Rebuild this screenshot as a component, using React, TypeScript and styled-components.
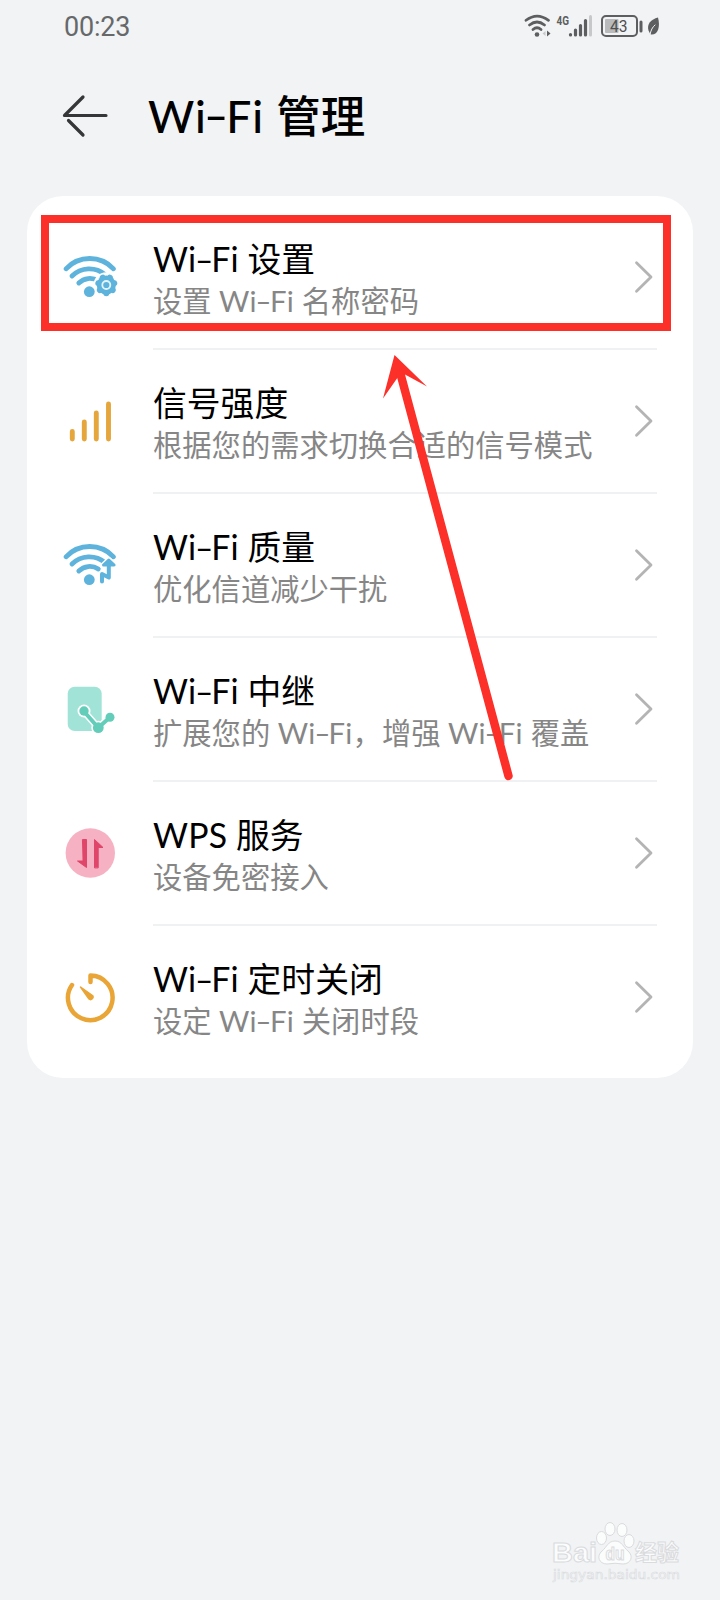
import React from "react";
import styled, { createGlobalStyle } from "styled-components";

const Global = createGlobalStyle`
  * { box-sizing: border-box; }
  body { margin: 0; background: #f1f3f5; font-family: "Lato", "Noto Sans CJK SC", sans-serif; }
`;

const Screen = styled.div`
  position: relative;
  width: 720px;
  height: 1600px;
  overflow: hidden;
  background: #f1f3f5;
`;

const StatusBar = styled.header`
  display: flex;
  justify-content: space-between;
  align-items: center;
  height: 54px;
  padding: 0 58px 0 64px;
`;

const Clock = styled.time`
  font-family: "Roboto", sans-serif;
  font-size: 27px;
  line-height: 54px;
  letter-spacing: -0.2px;
  color: #66686a;
`;

const TitleBar = styled.div`
  display: flex;
  align-items: center;
  gap: 37px;
  height: 142px;
  padding: 0 0 19px 61px;
`;

const Heading = styled.h1`
  margin: 0;
  padding-top: 1px;
  font-size: 44.5px;
  line-height: 60px;
  font-weight: 500;
  color: #000;
  white-space: pre;
`;

const Card = styled.main`
  width: 666px;
  margin-left: 27px;
  padding: 10px 36px 8px 33px;
  border-radius: 36px;
  background: #fff;
`;

const Row = styled.section`
  display: flex;
  height: 144px;
`;

const IconSlot = styled.div`
  display: flex;
  align-items: center;
  width: 93px;
  padding-bottom: 2px;
`;

const RowBody = styled.div<{ $last: boolean }>`
  flex: 1;
  display: flex;
  align-items: center;
  justify-content: space-between;
  padding-right: 3px;
  border-bottom: 2px solid ${(p) => (p.$last ? "transparent" : "#f0f1f2")};
`;

const Texts = styled.div`
  display: flex;
  flex-direction: column;
  padding-top: 6px;
`;

const Title = styled.div`
  font-size: 33.8px;
  line-height: 42px;
  color: #000;
  white-space: pre;
`;

const Subtitle = styled.div`
  font-size: 29.3px;
  line-height: 42px;
  color: #868686;
  white-space: pre;
`;

const Latin = styled.span<{ $space: number }>`
  letter-spacing: ${(p) => p.$space}em;
`;

const Dash = styled.span`
  display: inline-block;
  margin: 0 0.035em;
  transform: scale(1.5, 0.9);
`;

const Highlight = styled.div`
  position: absolute;
  left: 41px;
  top: 215px;
  width: 630px;
  height: 116px;
  border: 8px solid #fc3029;
`;

const Overlay = styled.svg`
  position: absolute;
  left: 0;
  top: 0;
  pointer-events: none;
`;

const Watermark = styled.svg`
  position: absolute;
  left: 545px;
  top: 1515px;
`;

const Mixed = ({ text, space = 0.005 }: { text: string; space?: number }) => (
  <>
    {text.split(/([A-Za-z]+ ?|-)/).map((part, i) => {
      if (part === "-") return <Dash key={i}>-</Dash>;
      return i % 2 ? <Latin key={i} $space={space}>{part}</Latin> : part;
    })}
  </>
);

const Glyph = ({ children }: { children: React.ReactNode }) => (
  <svg width="60" height="60" viewBox="0 0 60 60" fill="none" strokeLinecap="round" strokeLinejoin="round">
    {children}
  </svg>
);

const WifiArcs = () => (
  <g stroke="#5db3dc" strokeWidth="4.8">
    <path d="M6 21.800a32.500 32.500 0 0 1 47.500 0" />
    <path d="M12 29a24.500 24.500 0 0 1 33 -1.500" />
    <path d="M18.800 36a15.500 15.500 0 0 1 19.500 -2" />
  </g>
);

const WifiDot = () => <circle cx="29.300" cy="44.700" r="5.400" fill="#5db3dc" />;

const lobes = Array.from({ length: 7 }, (_, i) => 180 + (i * 360) / 7);

const SettingsIcon = () => (
  <Glyph>
    <WifiArcs />
    <circle cx="46.300" cy="38" r="12.800" fill="#fff" />
    <WifiDot />
    <g fill="#5db3dc">
      <circle cx="46.300" cy="38" r="9.600" />
      {lobes.map((a) => (
        <circle key={a} cx="46.300" cy="29.800" r="3" transform={`rotate(${a} 46.300 38)`} />
      ))}
    </g>
    <circle cx="46.300" cy="38" r="4" stroke="#e5f4fb" strokeWidth="1.800" />
  </Glyph>
);

const StrengthIcon = () => (
  <Glyph>
    <path d="M12.300 40.500v7.500M24.300 31v17M36.300 22v26M48.500 13v35" stroke="#e5a63c" strokeWidth="4.900" />
  </Glyph>
);

const QualityIcon = () => (
  <Glyph>
    <WifiArcs />
    <path d="M42 46.500v-7.500l6.800 3.500v-13M44 30l4.800-4.500 4.800 4.500z" stroke="#fff" strokeWidth="6.500" />
    <WifiDot />
    <path d="M42 46.500v-7.500l6.800 3.500v-13" stroke="#5db3dc" strokeWidth="4" />
    <path d="M43.500 30l5.300-5 5.300 5z" fill="#5db3dc" stroke="#5db3dc" strokeWidth="3" />
  </Glyph>
);

const RelayIcon = () => (
  <Glyph>
    <rect x="7.700" y="7.700" width="34" height="44.300" rx="7" fill="#a2e3d8" />
    <path d="M24 32.500L38.300 48.700L50 38.300" stroke="#fff" strokeWidth="7" />
    <g fill="#fff">
      <circle cx="24" cy="32" r="6.500" />
      <circle cx="38.300" cy="48.700" r="7" />
    </g>
    <path d="M24 32.500L38.300 48.700L50 38.300" stroke="#63cdb9" strokeWidth="4" />
    <g fill="#63cdb9">
      <circle cx="24" cy="32" r="4.700" />
      <circle cx="38.300" cy="48.700" r="5.400" />
      <circle cx="50" cy="38.300" r="4.500" />
    </g>
  </Glyph>
);

const WpsIcon = () => (
  <Glyph>
    <circle cx="30.300" cy="30" r="24.700" fill="#f6b2c2" />
    <path d="M22.800 16.500h3.700v28l-9-6.500h5.300zM34.500 44.500v-28l8.500 8h-4.800v20z" fill="#e0456a" stroke="#e0456a" strokeWidth="1" />
  </Glyph>
);

const TimerIcon = () => (
  <Glyph>
    <path d="M30.500 15v-6.500a22.300 22.300 0 1 1 -18.500 9.500" stroke="#e9a535" strokeWidth="4.500" />
    <path d="M20.500 20L32.500 28.500a2.500 2.500 0 0 1 -3.500 3.500z" fill="#e9a535" stroke="#e9a535" strokeWidth="1.500" />
  </Glyph>
);

const Chevron = () => (
  <svg width="20" height="34" viewBox="0 0 20 34" fill="none">
    <path d="M2.500 2.800L17 17L2.500 31.200" stroke="#b4b4b4" strokeWidth="2.800" strokeLinecap="round" strokeLinejoin="round" />
  </svg>
);

const rows = [
  { icon: SettingsIcon, title: "Wi-Fi 设置", sub: "设置 Wi-Fi 名称密码" },
  { icon: StrengthIcon, title: "信号强度", sub: "根据您的需求切换合适的信号模式" },
  { icon: QualityIcon, title: "Wi-Fi 质量", sub: "优化信道减少干扰" },
  { icon: RelayIcon, title: "Wi-Fi 中继", sub: "扩展您的 Wi-Fi，增强 Wi-Fi 覆盖" },
  { icon: WpsIcon, title: "WPS 服务", sub: "设备免密接入" },
  { icon: TimerIcon, title: "Wi-Fi 定时关闭", sub: "设定 Wi-Fi 关闭时段" },
];

const StatusIcons = () => (
  <svg width="140" height="30" viewBox="522 12 140 30" fill="none" strokeLinecap="round">
    <g stroke="#5c5e60" strokeWidth="2.700">
      <path d="M526 20.300q11-8.500 22.500 0M529.500 25q7.500-6 15 0M533 29.500q4-3.500 8 0" />
    </g>
    <circle cx="537" cy="34.500" r="2.300" fill="#5c5e60" />
    <path d="M547 30.500v6l3.500-3z" fill="#5c5e60" />
    <path d="M545.500 31v5l-3-2.500z" fill="#c6c8ca" />
    <text x="556.500" y="25" fontFamily="Roboto" fontWeight="700" fontSize="13.500" fill="#5c5e60" textLength="12.500" lengthAdjust="spacingAndGlyphs">4G</text>
    <path d="M570.500 34.500v.5M575.500 30v5M580.500 25.500v9.500M585.500 20.500v14.500" stroke="#5c5e60" strokeWidth="3.200" />
    <path d="M590.500 16.500v18.500" stroke="#c6c8ca" strokeWidth="3" />
    <rect x="602" y="16" width="35" height="20" rx="4" stroke="#5c5e60" strokeWidth="2" />
    <rect x="605" y="19" width="13.500" height="14" rx="1" fill="#b8babc" />
    <text x="610" y="32.200" fontFamily="Roboto" fontSize="16" fill="#4e5052" textLength="17.500" lengthAdjust="spacingAndGlyphs">43</text>
    <path d="M641 22v9" stroke="#5c5e60" strokeWidth="3" />
    <path d="M658 17.500c-7 2-11.500 6.500-9.500 13l2 4c7.500 1 10-7.500 7.500-17z" fill="#5c5e60" />
    <path d="M650 35q1-7 5-10" stroke="#f1f3f5" strokeWidth="1" />
  </svg>
);

export default function App() {
  return (
    <Screen>
      <Global />
      <StatusBar>
        <Clock>00:23</Clock>
        <StatusIcons />
      </StatusBar>
      <TitleBar>
        <svg width="50" height="46" viewBox="0 0 50 46" fill="none" stroke="#343638" strokeWidth="3.200" strokeLinecap="round" strokeLinejoin="round">
          <path d="M22 4L3.500 22.500H45M7.500 27.500L22 42" />
        </svg>
        <Heading><Mixed text="Wi-Fi 管理" space={0.02} /></Heading>
      </TitleBar>
      <Card>
        {rows.map(({ icon: Icon, title, sub }, i) => (
          <Row key={title}>
            <IconSlot><Icon /></IconSlot>
            <RowBody $last={i === rows.length - 1}>
              <Texts>
                <Title><Mixed text={title} /></Title>
                <Subtitle><Mixed text={sub} space={0.01} /></Subtitle>
              </Texts>
              <Chevron />
            </RowBody>
          </Row>
        ))}
      </Card>
      <Highlight />
      <Overlay width="720" height="1600" viewBox="0 0 720 1600">
        <path d="M394.500 355L427 386.500L405 374.500L398 377L383 398.500Z" fill="#fc3029" />
        <path d="M400.500 374L508.500 776" stroke="#fc3029" strokeWidth="8.500" strokeLinecap="round" />
      </Overlay>
      <Watermark width="140" height="70" viewBox="0 0 140 70">
        <g fill="#fbfcfc" stroke="#d9dbdd" strokeWidth="1">
          <text x="7" y="47" fontFamily="Liberation Sans" fontWeight="700" fontSize="28" textLength="45" lengthAdjust="spacingAndGlyphs">Bai</text>
          <ellipse cx="56.500" cy="23" rx="5" ry="6.500" />
          <ellipse cx="65" cy="14" rx="5" ry="6.500" />
          <ellipse cx="77" cy="15" rx="5" ry="6.500" />
          <ellipse cx="84" cy="26" rx="5" ry="6.500" />
          <path d="M70 26c-7 0-8 6-13 10c-6 5-3 13 5 13q8-1.500 16 0c8 0 11-8 5-13c-5-4-6-10-13-10z" />
          <text x="60.500" y="45" fontFamily="Liberation Sans" fontWeight="700" fontSize="18" textLength="19" lengthAdjust="spacingAndGlyphs">du</text>
          <text x="90" y="45" fontFamily="Noto Sans CJK SC" fontWeight="700" fontSize="22">经验</text>
          <text x="8" y="64" fontFamily="DejaVu Sans" fontSize="12.500" strokeWidth=".6" textLength="127" lengthAdjust="spacingAndGlyphs">jingyan.baidu.com</text>
        </g>
      </Watermark>
    </Screen>
  );
}
